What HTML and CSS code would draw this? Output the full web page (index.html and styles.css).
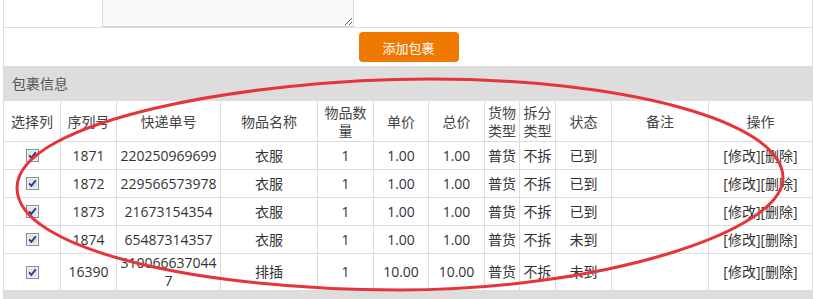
FILE: index.html
```html
<!DOCTYPE html>
<html lang="zh-CN">
<head>
<meta charset="utf-8">
<title>包裹信息</title>
<link rel="stylesheet" href="styles.css">
</head>
<body>
<div class="page">
  <div class="row row-note">
    <textarea class="note"></textarea>
  </div>
  <div class="row row-btn">
    <button class="btn-add" type="button">添加包裹</button>
  </div>
  <div class="section-title">包裹信息</div>
  <table class="pkg">
    <colgroup>
      <col class="c57"><col class="c56"><col class="c104"><col class="c97"><col class="c56"><col class="c55"><col class="c56"><col class="c35"><col class="c36"><col class="c56"><col class="c97"><col class="c105">
    </colgroup>
    <thead>
      <tr>
        <th>选择列</th><th>序列号</th><th>快递单号</th><th>物品名称</th><th>物品数量</th><th>单价</th><th>总价</th><th>货物类型</th><th>拆分类型</th><th>状态</th><th>备注</th><th>操作</th>
      </tr>
    </thead>
    <tbody>
      <tr>
        <td><svg class="cb" viewBox="0 0 13 13"><rect x="0.5" y="0.5" width="12" height="12" fill="#f3f3f3" stroke="#8c8c8c"/><rect x="2" y="2" width="9" height="9" fill="#dfe3ea"/><path d="M3.2 6.3 L5.4 8.8 L9.8 3.4" fill="none" stroke="#1f3c8c" stroke-width="1.8"/></svg></td>
        <td>1871</td><td class="num">220250969699</td><td>衣服</td><td>1</td><td>1.00</td><td>1.00</td><td>普货</td><td>不拆</td><td>已到</td><td></td><td>[修改][删除]</td>
      </tr>
      <tr>
        <td><svg class="cb" viewBox="0 0 13 13"><rect x="0.5" y="0.5" width="12" height="12" fill="#f3f3f3" stroke="#8c8c8c"/><rect x="2" y="2" width="9" height="9" fill="#dfe3ea"/><path d="M3.2 6.3 L5.4 8.8 L9.8 3.4" fill="none" stroke="#1f3c8c" stroke-width="1.8"/></svg></td>
        <td>1872</td><td class="num">229566573978</td><td>衣服</td><td>1</td><td>1.00</td><td>1.00</td><td>普货</td><td>不拆</td><td>已到</td><td></td><td>[修改][删除]</td>
      </tr>
      <tr>
        <td><svg class="cb" viewBox="0 0 13 13"><rect x="0.5" y="0.5" width="12" height="12" fill="#f3f3f3" stroke="#8c8c8c"/><rect x="2" y="2" width="9" height="9" fill="#dfe3ea"/><path d="M3.2 6.3 L5.4 8.8 L9.8 3.4" fill="none" stroke="#1f3c8c" stroke-width="1.8"/></svg></td>
        <td>1873</td><td class="num">21673154354</td><td>衣服</td><td>1</td><td>1.00</td><td>1.00</td><td>普货</td><td>不拆</td><td>已到</td><td></td><td>[修改][删除]</td>
      </tr>
      <tr>
        <td><svg class="cb" viewBox="0 0 13 13"><rect x="0.5" y="0.5" width="12" height="12" fill="#f3f3f3" stroke="#8c8c8c"/><rect x="2" y="2" width="9" height="9" fill="#dfe3ea"/><path d="M3.2 6.3 L5.4 8.8 L9.8 3.4" fill="none" stroke="#1f3c8c" stroke-width="1.8"/></svg></td>
        <td>1874</td><td class="num">65487314357</td><td>衣服</td><td>1</td><td>1.00</td><td>1.00</td><td>普货</td><td>不拆</td><td>未到</td><td></td><td>[修改][删除]</td>
      </tr>
      <tr>
        <td><svg class="cb" viewBox="0 0 13 13"><rect x="0.5" y="0.5" width="12" height="12" fill="#f3f3f3" stroke="#8c8c8c"/><rect x="2" y="2" width="9" height="9" fill="#dfe3ea"/><path d="M3.2 6.3 L5.4 8.8 L9.8 3.4" fill="none" stroke="#1f3c8c" stroke-width="1.8"/></svg></td>
        <td>16390</td><td class="num">3100666370447</td><td>排插</td><td>1</td><td>10.00</td><td>10.00</td><td>普货</td><td>不拆</td><td>未到</td><td></td><td>[修改][删除]</td>
      </tr>
    </tbody>
  </table>
  <div class="section-title next"></div>
</div>
<svg class="annot" width="813" height="299" viewBox="0 0 813 299">
  <path d="M17 188 C17 120 250 79 430 79 C620 79 783 120 783 178 C783 232 600 290 400 290 C200 290 17 250 17 188 Z" fill="none" stroke="#e4353b" stroke-width="3"/>
</svg>
</body>
</html>
```

FILE: styles.css
```css
html, body {
  margin: 0;
  padding: 0;
  background: #fff;
}
body {
  position: relative;
  width: 813px;
  height: 299px;
  overflow: hidden;
  font-family: "Open Sans", "Noto Sans CJK SC", sans-serif;
  font-size: 14px;
  color: #333;
}
.page {
  margin-left: 3px;
  margin-top: -34px;
  width: 810px;
}
.row {
  display: flex;
  border-left: 1px solid #dcdcdc;
  border-right: 1px solid #dcdcdc;
  border-bottom: 1px solid #dcdcdc;
  box-sizing: border-box;
}
.row-note {
  height: 62px;
  align-items: flex-end;
  padding-left: 98px;
}
.note {
  display: block;
  box-sizing: border-box;
  width: 252px;
  height: 60px;
  margin: 0;
  border: 1px solid #d4d4d4;
  background: #fafafa;
  font: inherit;
}
.row-btn {
  height: 38px;
  border-bottom: none;
  justify-content: center;
  align-items: center;
}
.btn-add {
  width: 100px;
  height: 30px;
  margin-left: 1px;
  border: none;
  border-radius: 4px;
  background: #ef7800;
  color: #fff;
  font-family: "Noto Sans CJK SC", sans-serif;
  font-size: 13px;
  padding: 0;
}
.section-title {
  height: 34px;
  line-height: 34px;
  padding-left: 9px;
  background: #dddddd;
  color: #555;
  font-family: "Noto Sans CJK SC", sans-serif;
  font-size: 14px;
}
.section-title.next {
  height: 20px;
}
.pkg {
  width: 810px;
  table-layout: fixed;
  border-collapse: collapse;
}
.c57 { width: 57px; }
.c56 { width: 56px; }
.c104 { width: 104px; }
.c97 { width: 97px; }
.c55 { width: 55px; }
.c35 { width: 35px; }
.c36 { width: 36px; }
.c105 { width: 104px; }
.pkg th, .pkg td {
  border: 1px solid #dcdcdc;
  text-align: center;
  vertical-align: middle;
  line-height: 18px;
  overflow: hidden;
}
.pkg th {
  font-weight: normal;
  color: #444;
  padding: 2px 0;
  font-family: "Noto Sans CJK SC", sans-serif;
}
.pkg td {
  height: 28px;
  padding: 0;
  box-sizing: border-box;
}
.pkg td.num {
  padding: 0 3px;
  word-break: break-all;
}
.cb {
  display: block;
  width: 13px;
  height: 13px;
  margin: 0 auto;
}
.annot {
  position: absolute;
  left: 0;
  top: 0;
  pointer-events: none;
}
```
